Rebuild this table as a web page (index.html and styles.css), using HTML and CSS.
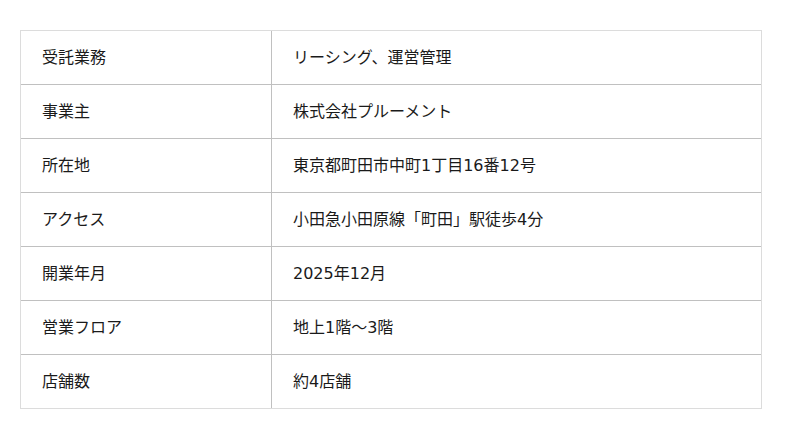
FILE: index.html
```html
<!DOCTYPE html>
<html lang="ja">
<head>
<meta charset="utf-8">
<link rel="stylesheet" href="styles.css">
</head>
<body>
<div class="info">
  <div class="row"><div class="label">受託業務</div><div class="value">リーシング、運営管理</div></div>
  <div class="row"><div class="label">事業主</div><div class="value">株式会社プルーメント</div></div>
  <div class="row"><div class="label">所在地</div><div class="value">東京都町田市中町1丁目16番12号</div></div>
  <div class="row"><div class="label">アクセス</div><div class="value">小田急小田原線「町田」駅徒歩4分</div></div>
  <div class="row"><div class="label">開業年月</div><div class="value">2025年12月</div></div>
  <div class="row"><div class="label">営業フロア</div><div class="value">地上1階～3階</div></div>
  <div class="row"><div class="label">店舗数</div><div class="value">約4店舗</div></div>
</div>
</body>
</html>
```
FILE: styles.css
```css
html, body {
  margin: 0;
  background: #fff;
}
body {
  padding: 30px 38px 0 20px;
  font-family: "DejaVu Sans", "Noto Sans CJK JP", sans-serif;
  font-size: 16px;
  color: #1a1a1a;
}
.info {
  border: 1px solid #dcdcdc;
  width: 740px;
}
.row {
  display: grid;
  grid-template-columns: 251px 1fr;
  height: 53px;
  border-top: 1px solid #c0c0c0;
}
.row:first-child {
  border-top: none;
}
.label,
.value {
  display: flex;
  align-items: center;
  padding-left: 21px;
  line-height: 1;
}
.label {
  border-right: 1px solid #c0c0c0;
}
```
